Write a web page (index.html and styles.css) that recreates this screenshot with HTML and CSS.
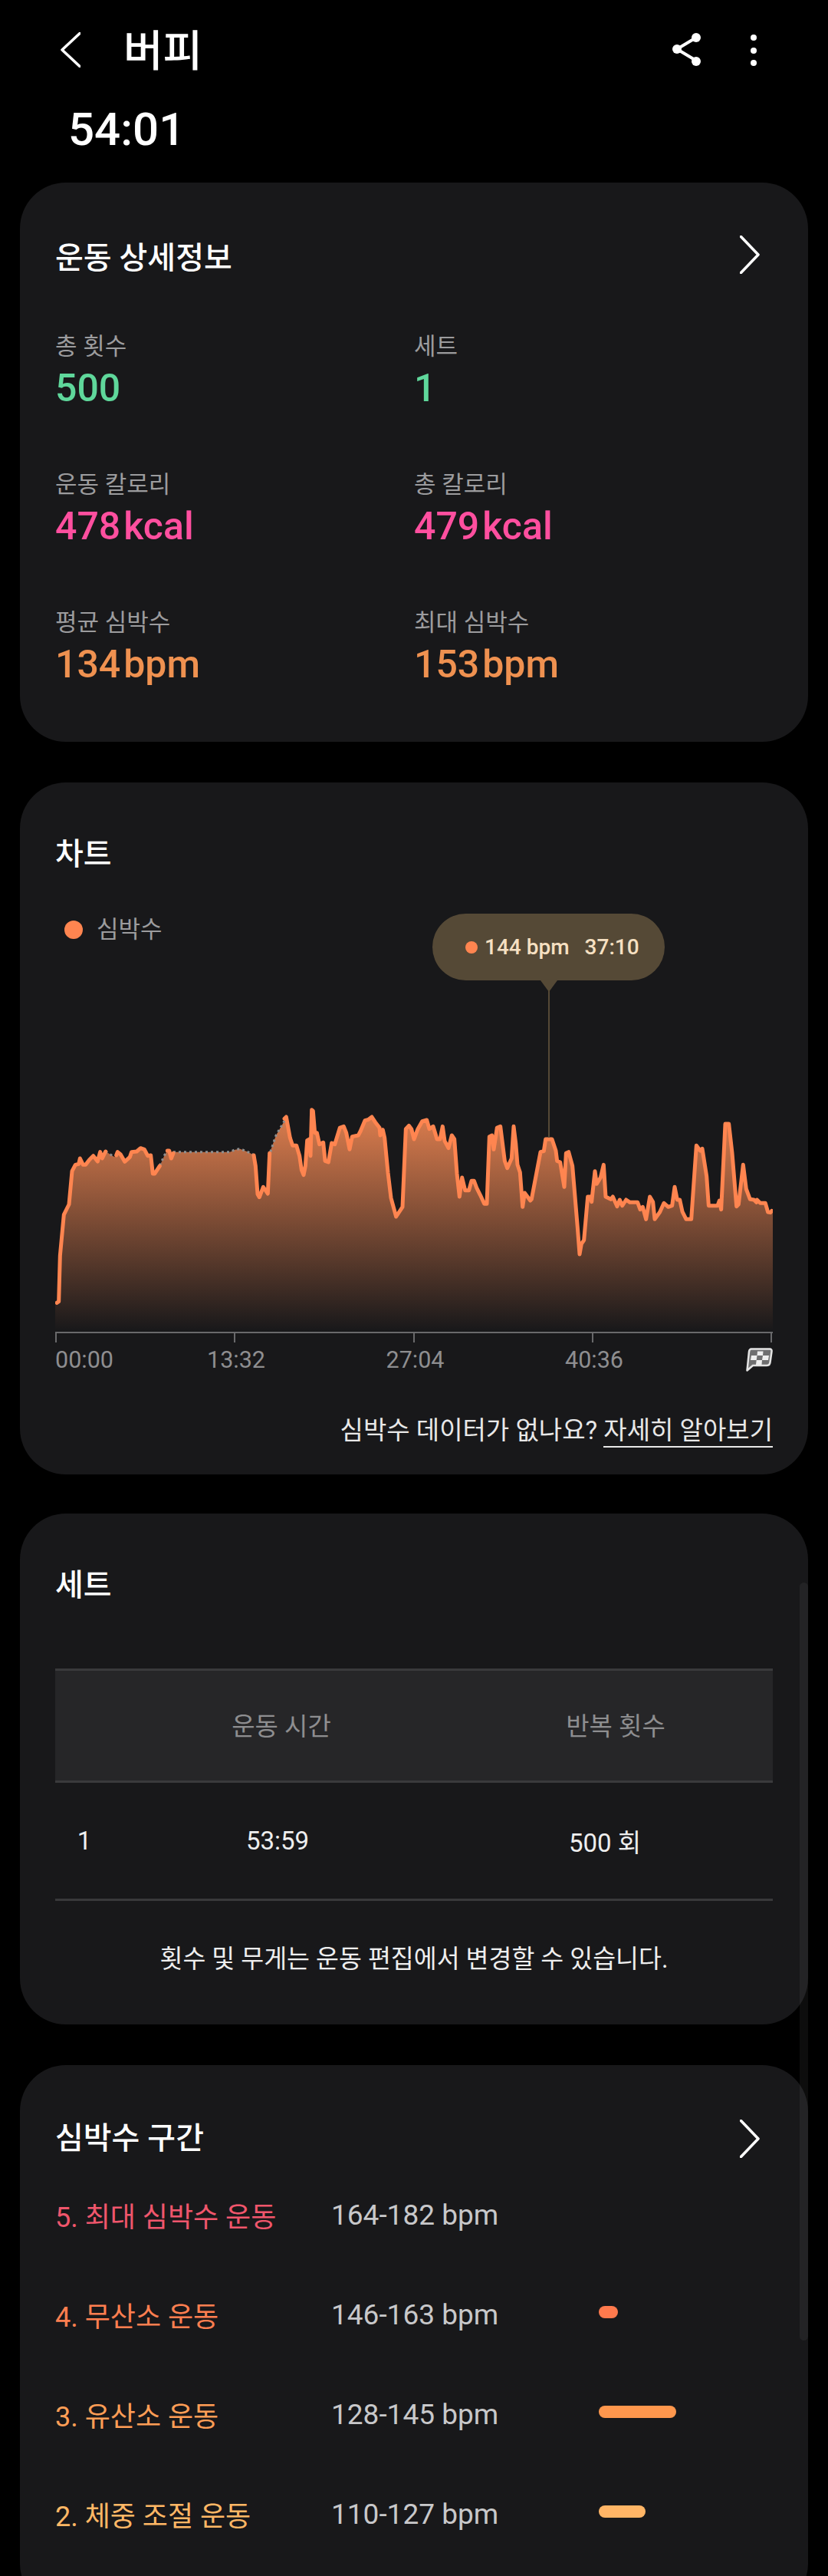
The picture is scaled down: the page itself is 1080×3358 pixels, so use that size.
FILE: index.html
```html
<!DOCTYPE html>
<html lang="ko">
<head>
	<meta charset="UTF-8">
	<title>버피</title>
	<link rel="stylesheet" href="styles.css">
</head>

<body>

<header class="topbar">
	<svg class="back" width="26" height="46" viewBox="0 0 26 46"><path d="M25 1.5 2 23l23 21.5"/></svg>
	<h1>버피</h1>
	<div class="actions">
		<svg width="40" height="44" viewBox="0 0 40 44"><path class="share-line" d="M31 6 6 21l25 15"/><circle cx="6" cy="21" r="6"/><circle cx="31" cy="6" r="6"/><circle cx="31" cy="37" r="6"/></svg>
		<svg width="10" height="44" viewBox="0 0 10 44"><circle cx="5" cy="6" r="4"/><circle cx="5" cy="23" r="4"/><circle cx="5" cy="39" r="4"/></svg>
	</div>
</header>
<div class="duration">54:01</div>

<section class="card">
	<div class="card-head stats-head">
		<h2>운동 상세정보</h2>
		<svg class="chevron" width="26" height="50" viewBox="0 0 26 50"><path d="M1.5 1.5 24 25 1.5 48.5"/></svg>
	</div>
	<div class="stats">
		<div class="stat">
			<div class="stat-label">총 횟수</div>
			<div class="stat-value green">500</div>
		</div>
		<div class="stat">
			<div class="stat-label">세트</div>
			<div class="stat-value green">1</div>
		</div>
		<div class="stat">
			<div class="stat-label">운동 칼로리</div>
			<div class="stat-value pink">478<span class="unit">kcal</span></div>
		</div>
		<div class="stat">
			<div class="stat-label">총 칼로리</div>
			<div class="stat-value pink">479<span class="unit">kcal</span></div>
		</div>
		<div class="stat">
			<div class="stat-label">평균 심박수</div>
			<div class="stat-value orange">134<span class="unit">bpm</span></div>
		</div>
		<div class="stat">
			<div class="stat-label">최대 심박수</div>
			<div class="stat-value orange">153<span class="unit">bpm</span></div>
		</div>
	</div>
</section>

<section class="card chart-card">
	<div class="card-head chart-head">
		<h2>차트</h2>
	</div>
	<div class="chart-wrap">
		<div class="legend"><span class="legend-dot"></span>심박수</div>
		<div class="tooltip"><span class="tooltip-dot"></span><span>144 bpm</span><span class="tooltip-time">37:10</span></div>
		<svg class="chart" width="936" height="320" viewBox="6 0 2808 960">
			<defs>
				<linearGradient id="hrFill" gradientUnits="userSpaceOnUse" x1="0" y1="50" x2="0" y2="915">
					<stop offset="0" stop-color="#e07f4f"/>
					<stop offset="1" stop-color="#18181a"/>
				</linearGradient>
			</defs>
			<path fill="url(#hrFill)" d="M6 915V805L20 800 25 620 40 460 60 420 72 290 85 265 98 262 103 240 115 265 125 265 140 245 155 230 172 252 182 215 190 240 203 213 238 235 245 228 250 215 262 225 278 253 298 235 305 215 325 213 340 200 355 205 368 230 380 228 388 300 395 300 415 270 435 225 445 210 452 210 460 240 468 215 690 215 710 206 730 203 755 213 780 225 783 228 790 270 798 380 805 392 820 352 838 378 845 220 870 150 905 90 910 78 925 160 935 190 950 190 962 230 970 285 978 305 985 270 992 170 1000 165 1005 230 1010 50 1015 55 1022 140 1030 140 1040 185 1055 178 1062 250 1075 255 1088 180 1100 185 1120 120 1135 115 1145 140 1158 205 1168 155 1192 150 1200 135 1218 92 1232 88 1245 78 1258 98 1275 120 1278 150 1288 128 1295 160 1308 295 1320 395 1340 468 1365 430 1378 125 1390 112 1400 125 1410 165 1425 125 1442 95 1460 90 1470 125 1485 115 1500 165 1512 165 1522 115 1530 172 1545 200 1558 150 1568 165 1578 300 1588 390 1598 315 1610 365 1625 365 1635 328 1645 328 1655 355 1670 385 1685 418 1695 418 1705 155 1715 150 1722 205 1735 120 1748 115 1765 250 1775 278 1792 240 1800 115 1808 180 1815 265 1825 295 1835 430 1843 375 1865 405 1870 400 1905 215 1918 212 1925 165 1950 165 1965 210 1970 250 1982 255 1998 352 2005 220 2015 215 2030 270 2050 510 2058 615 2065 575 2075 560 2090 390 2100 390 2105 410 2118 290 2125 340 2140 315 2152 265 2160 390 2180 400 2188 390 2205 428 2215 402 2225 425 2240 402 2255 412 2285 412 2295 440 2305 430 2318 478 2333 390 2345 410 2352 478 2372 450 2388 415 2405 430 2420 425 2430 352 2440 402 2450 402 2460 448 2475 478 2495 478 2515 190 2530 210 2538 202 2555 310 2563 425 2598 425 2605 405 2612 440 2628 105 2642 105 2655 220 2672 428 2680 420 2698 265 2710 360 2725 400 2740 402 2750 412 2752 402 2765 415 2785 415 2795 450 2805 452 2814 445V915Z"/>
			<path class="hr-gap" d="M203 213 238 235M415 268 435 225 445 210M468 215 690 215 710 206 730 203 755 213 780 225M848 215 870 150 905 90"/>
			<path class="hr-line" d="M12 805 20 800 25 620 40 460 60 420 72 290 85 265 98 262 103 240 115 265 125 265 140 245 155 230 172 252 182 215 190 240 203 213"/>
			<path class="hr-line" d="M245 228 250 215 262 225 278 253 298 235 305 215 325 213 340 200 355 205 368 230 380 228 388 300 395 300 415 270"/>
			<path class="hr-line" d="M445 210 452 210 460 240 468 220"/>
			<path class="hr-line" d="M783 228 790 270 798 380 805 392 820 352 838 378 845 220"/>
			<path class="hr-line" d="M903 85 910 78 925 160 935 190 950 190 962 230 970 285 978 305 985 270 992 170 1000 165 1005 230 1010 50 1015 55 1022 140 1030 140 1040 185 1055 178 1062 250 1075 255 1088 180 1100 185 1120 120 1135 115 1145 140 1158 205 1168 155 1192 150 1200 135 1218 92 1232 88 1245 78 1258 98 1275 120 1278 150 1288 128 1295 160 1308 295 1320 395 1340 468 1365 430 1378 125 1390 112 1400 125 1410 165 1425 125 1442 95 1460 90 1470 125 1485 115 1500 165 1512 165 1522 115 1530 172 1545 200 1558 150 1568 165 1578 300 1588 390 1598 315 1610 365 1625 365 1635 328 1645 328 1655 355 1670 385 1685 418 1695 418 1705 155 1715 150 1722 205 1735 120 1748 115 1765 250 1775 278 1792 240 1800 115 1808 180 1815 265 1825 295 1835 430 1843 375 1865 405 1870 400 1905 215 1918 212 1925 165 1950 165 1965 210 1970 250 1982 255 1998 352 2005 220 2015 215 2030 270 2050 510 2058 615 2065 575 2075 560 2090 390 2100 390 2105 410 2118 290 2125 340 2140 315 2152 265 2160 390 2180 400 2188 390 2205 428 2215 402 2225 425 2240 402 2255 412 2285 412 2295 440 2305 430 2318 478 2333 390 2345 410 2352 478 2372 450 2388 415 2405 430 2420 425 2430 352 2440 402 2450 402 2460 448 2475 478 2495 478 2515 190 2530 210 2538 202 2555 310 2563 425 2598 425 2605 405 2612 440 2628 105 2642 105 2655 220 2672 428 2680 420 2698 265 2710 360 2725 400 2740 402 2750 412 2752 402 2765 415 2785 415 2795 450 2805 452 2810 445"/>
			<path class="axis-line" d="M6 921H2814M9 921V960M708 921V960M1410 921V960M2109 921V960M2808 921V960"/>
		</svg>
		<div class="axis">
			<span>00:00</span>
			<span>13:32</span>
			<span>27:04</span>
			<span>40:36</span>
			<svg class="flag" width="36" height="32" viewBox="0 0 36 32">
				<path class="flag-body" d="M8 1.5H32Q35 1.5 34.5 5L32.5 19Q32 23 28 23H10L2.5 29.5 5 5Q5.5 1.5 8 1.5Z"/>
				<path class="flag-check" d="M16 4.5H23.5L23 10H31L30 16H22L21.5 22H14L14.7 16H7L8 10H15.5Z"/>
				<path class="flag-mid" d="M15.5 10H23L22 16H14.7Z"/>
			</svg>
		</div>
	</div>
	<p class="no-data">심박수 데이터가 없나요? <span class="more">자세히 알아보기</span></p>
</section>

<section class="card sets-card">
	<div class="card-head sets-head">
		<h2>세트</h2>
	</div>
	<div class="sets-header">
		<span></span>
		<span>운동 시간</span>
		<span class="reps-title">반복 횟수</span>
	</div>
	<div class="sets-row">
		<span>1</span>
		<span>53:59</span>
		<span>500 회</span>
	</div>
	<p class="sets-note">횟수 및 무게는 운동 편집에서 변경할 수 있습니다.</p>
</section>

<section class="card zones-card">
	<div class="card-head zones-head">
		<h2>심박수 구간</h2>
		<svg class="chevron" width="26" height="50" viewBox="0 0 26 50"><path d="M1.5 1.5 24 25 1.5 48.5"/></svg>
	</div>
	<div class="zone">
		<span class="zone-name z5">5. 최대 심박수 운동</span>
		<span class="zone-range">164-182 bpm</span>
	</div>
	<div class="zone">
		<span class="zone-name z4">4. 무산소 운동</span>
		<span class="zone-range">146-163 bpm</span>
		<span class="zone-bar z4-bar" style="width: 25px"></span>
	</div>
	<div class="zone">
		<span class="zone-name z3">3. 유산소 운동</span>
		<span class="zone-range">128-145 bpm</span>
		<span class="zone-bar z3-bar" style="width: 101px"></span>
	</div>
	<div class="zone">
		<span class="zone-name z2">2. 체중 조절 운동</span>
		<span class="zone-range">110-127 bpm</span>
		<span class="zone-bar z2-bar" style="width: 61px"></span>
	</div>
</section>

<div class="scrollbar"></div>

</body>
</html>
```

FILE: styles.css
```css
html,
body {
	margin: 0;
	height: 3358px;
	overflow: hidden;
}

body {
	position: relative;
	background: #000;
	color: #fff;
	font-family: Roboto, 'Noto Sans CJK KR', sans-serif;
}

h1,
h2,
p {
	margin: 0;
}

/* top bar */

.topbar {
	height: 130px;
	display: flex;
	align-items: center;
	padding: 0 92px 0 79px;
}

.back path,
.chevron path {
	fill: none;
	stroke: #fff;
	stroke-width: 3.5px;
	stroke-linecap: round;
	stroke-linejoin: round;
}

.topbar h1 {
	margin-left: 56px;
	padding-top: 4px;
	font-size: 56px;
	font-weight: 500;
	line-height: 70px;
}

.actions {
	margin-left: auto;
	display: flex;
	align-items: center;
	gap: 61px;
}

.actions circle {
	fill: #fff;
}

.share-line {
	fill: none;
	stroke: #fff;
	stroke-width: 4px;
}

.duration {
	padding-left: 89px;
	font-size: 60px;
	font-weight: 500;
	line-height: 78px;
	margin-bottom: 30px;
}

/* cards */

.card {
	margin: 0 26px 53px;
	padding: 0 46px;
	background: #18181a;
	border-radius: 60px;
}

.card-head {
	display: flex;
	justify-content: space-between;
	align-items: center;
	padding: 68px 17px 0 0;
}

.card-head h2 {
	font-size: 40px;
	font-weight: 500;
	line-height: 52px;
}

.stats-head {
	align-items: flex-start;
	margin-bottom: 67px;
}

.stats-head h2 {
	padding-top: 5px;
}

.stats-head .chevron {
	margin-top: 1px;
}

/* stats */

.stats {
	display: grid;
	grid-template-columns: 468px 1fr;
	row-gap: 70px;
	padding-bottom: 67px;
}

.stat-label {
	font-size: 31px;
	line-height: 44px;
	color: #9c9c9e;
}

.stat-value {
	margin-top: -2px;
	font-size: 50px;
	font-weight: 500;
	line-height: 68px;
}

.unit {
	margin-left: 4px;
}

.green {
	color: #5fd79b;
}

.pink {
	color: #ff4f9f;
}

.orange {
	color: #ef9150;
}

/* chart */

.chart-card {
	margin-bottom: 51px;
	padding-bottom: 35px;
}

.chart-head {
	margin-bottom: 50px;
}

.chart-wrap {
	position: relative;
}

.legend {
	display: flex;
	align-items: center;
	gap: 18px;
	padding-left: 12px;
	font-size: 31px;
	line-height: 44px;
	color: #9c9c9e;
}

.legend-dot {
	width: 24px;
	height: 24px;
	border-radius: 50%;
	background: #ff8550;
}

.chart {
	display: block;
	margin-top: 196px;
}

.hr-line {
	fill: none;
	stroke: #ff8550;
	stroke-width: 15px;
	stroke-linejoin: round;
	stroke-linecap: round;
}

.hr-gap {
	fill: none;
	stroke: #8f8f8f;
	stroke-width: 9px;
	stroke-dasharray: 9 12;
}

.axis-line {
	fill: none;
	stroke: #69696b;
	stroke-width: 6px;
}

.tooltip {
	position: absolute;
	left: 492px;
	top: 1px;
	width: 303px;
	height: 87px;
	box-sizing: border-box;
	padding-left: 43px;
	display: flex;
	align-items: center;
	border-radius: 44px;
	background: #554936;
	color: #f6e0c2;
	font-size: 28px;
	font-weight: 500;
}

.tooltip::before {
	content: '';
	position: absolute;
	left: 151px;
	top: 87px;
	width: 2px;
	height: 205px;
	background: #554936;
}

.tooltip::after {
	content: '';
	position: absolute;
	left: 141px;
	top: 87px;
	border-style: solid;
	border-width: 15px 11px 0;
	border-color: #554936 transparent transparent;
}

.tooltip-dot {
	width: 16px;
	height: 16px;
	margin-right: 9px;
	border-radius: 50%;
	background: #ff8550;
}

.tooltip-time {
	margin-left: 20px;
}

.axis {
	display: flex;
	align-items: center;
	margin-top: 1px;
	font-size: 30.5px;
	line-height: 44px;
	color: #8e8e90;
}

.axis span {
	width: 76px;
	text-align: center;
}

.axis span:nth-child(2) {
	margin-left: 122px;
}

.axis span:nth-child(n+3) {
	margin-left: 157.5px;
}

.flag {
	margin-left: auto;
}

.flag-body {
	fill: #6f6f70;
	stroke: #e4e4e4;
	stroke-width: 2.5px;
	stroke-linejoin: round;
}

.flag-check {
	fill: #eee;
}

.flag-mid {
	fill: #6f6f70;
}

.no-data {
	margin-top: 48px;
	text-align: right;
	font-size: 33px;
	line-height: 44px;
	color: #e8e8e8;
}

.more {
	display: inline-block;
	line-height: 41px;
	border-bottom: 2px solid #e8e8e8;
}

/* sets */

.sets-head {
	margin-bottom: 82px;
}

.sets-header,
.sets-row {
	display: grid;
	align-items: center;
	text-align: center;
	font-size: 33px;
}

.sets-header {
	grid-template-columns: 76px 438px 422px;
	height: 149px;
	box-sizing: border-box;
	padding-bottom: 4px;
	background: #262628;
	border-top: 3px solid #3a3a3c;
	border-bottom: 3px solid #3a3a3c;
	color: #8e8e90;
}

.reps-title {
	padding-left: 12px;
}

.sets-row {
	grid-template-columns: 76px 428px 426px;
	height: 154px;
	box-sizing: border-box;
	border-bottom: 3px solid #39393b;
	color: #eee;
}

.sets-note {
	margin-top: 54px;
	padding-bottom: 63px;
	text-align: center;
	font-size: 32.5px;
	line-height: 44px;
	color: #eee;
}

/* heart rate zones */

.zones-head {
	padding-top: 70px;
	margin-bottom: 8px;
}

.zones-card {
	padding-bottom: 60px;
}

.zone {
	display: grid;
	grid-template-columns: 360px 349px 1fr;
	align-items: center;
	height: 130px;
	font-size: 36px;
}

.zone-range {
	font-size: 37px;
	color: #c8c8ca;
}

.zone-bar {
	height: 16px;
	margin-top: -6px;
	border-radius: 8px;
}

.z5 {
	color: #f0566c;
}

.z4 {
	color: #ff7f50;
}

.z3 {
	color: #ff9e56;
}

.z2 {
	color: #ffb765;
}

.z4-bar {
	background: #ff7a4d;
}

.z3-bar {
	background: #ff974d;
}

.z2-bar {
	background: #ffb566;
}

.scrollbar {
	position: absolute;
	left: 1043px;
	top: 2063px;
	width: 11px;
	height: 988px;
	border-radius: 6px;
	background: rgba(255, 255, 255, 0.05);
}
```
